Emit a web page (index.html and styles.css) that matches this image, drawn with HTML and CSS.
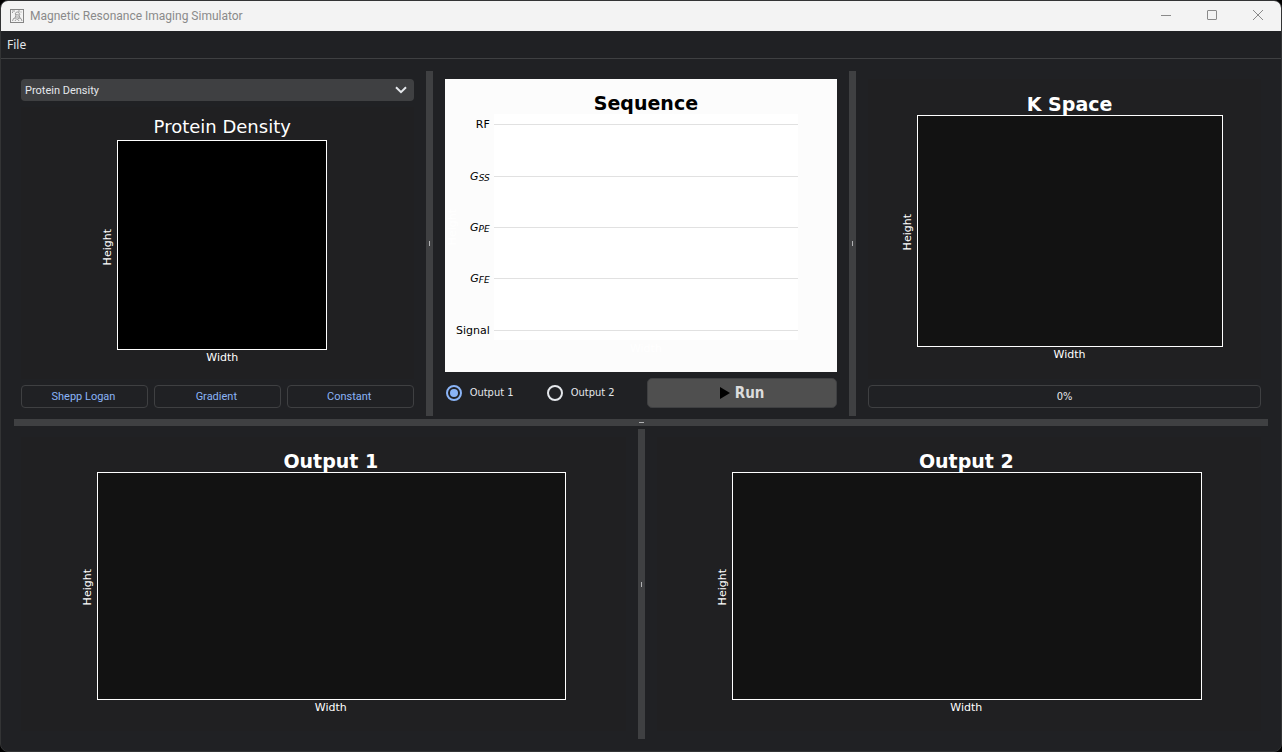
FILE: index.html
```html
<!DOCTYPE html>
<html lang="en">
<head>
<meta charset="utf-8">
<title>Magnetic Resonance Imaging Simulator</title>
<link rel="stylesheet" href="styles.css">
</head>
<body>
<div class="window">
  <header class="titlebar">
    <svg class="app-icon" width="14" height="14" viewBox="0 0 14 14" fill="none" stroke="#858585" aria-hidden="true">
      <rect x="0.5" y="0.5" width="13" height="13"/>
      <path d="M2 2h3M2.500 3v1M8 2h2M11 2.500v1M5 5l1.500-2h2L10 6M5 5.500l4 .5M6 6l-1 3M9 6l1 3M6 8h3M2.500 12l1-2.500 2-.5 1.500 1.500 2-1.500 2 .5 1 2.500M5 12l1-1.500M9 12l-1-1.500" stroke-width="0.800"/>
    </svg>
    <h1 class="window-title">Magnetic Resonance Imaging Simulator</h1>
    <div class="window-controls">
      <button class="window-button" type="button" aria-label="Minimize"><svg width="12" height="12" viewBox="0 0 12 12" stroke="#8a8a8a" fill="none"><path d="M1 5.500h10"/></svg></button>
      <button class="window-button" type="button" aria-label="Maximize"><svg width="12" height="12" viewBox="0 0 12 12" stroke="#8a8a8a" fill="none"><rect x="1.500" y="0.500" width="9" height="9" rx="0.500"/></svg></button>
      <button class="window-button" type="button" aria-label="Close"><svg width="12" height="12" viewBox="0 0 12 12" stroke="#8a8a8a" fill="none"><path d="M1 0l10 10M11 0L1 10"/></svg></button>
    </div>
  </header>
  <nav class="menubar"><button class="menu-item" type="button">File</button></nav>

  <main class="workspace">
    <div class="row row-top">
      <section class="panel" aria-label="Phantom">
        <div class="combo">
          <select class="combo-select" aria-label="Phantom property">
            <option>Protein Density</option>
            <option>T1</option>
            <option>T2</option>
          </select>
          <svg class="combo-arrow" width="12" height="8" viewBox="0 0 12 8" fill="none" stroke="#e4e7eb" stroke-width="2" aria-hidden="true"><path d="M1 1.200l5 5 5-5"/></svg>
        </div>
        <figure class="canvas">
          <figcaption class="plot-title plot-title-light">Protein Density</figcaption>
          <div class="square-row">
            <span class="y-label">Height</span>
            <div class="axes axes-square"></div>
          </div>
          <span class="x-label">Width</span>
        </figure>
        <div class="button-row">
          <button class="button" type="button">Shepp Logan</button>
          <button class="button" type="button">Gradient</button>
          <button class="button" type="button">Constant</button>
        </div>
      </section>

      <div class="splitter" role="separator" aria-orientation="vertical"></div>

      <section class="panel" aria-label="Sequence">
        <figure class="canvas canvas-light">
          <figcaption class="plot-title">Sequence</figcaption>
          <div class="tick-area">
            <span class="y-label ghost">Height</span>
            <div class="ticks">
              <span>RF</span>
              <span><i>G<small>SS</small></i></span>
              <span><i>G<small>PE</small></i></span>
              <span><i>G<small>FE</small></i></span>
              <span>Signal</span>
            </div>
          </div>
          <div class="lines"><hr><hr><hr><hr><hr></div>
          <span class="x-label ghost">Width</span>
        </figure>
        <div class="run-row">
          <label class="radio"><input type="radio" name="output" checked>Output 1</label>
          <label class="radio"><input type="radio" name="output">Output 2</label>
          <button class="run" type="button"><svg width="10" height="12" viewBox="0 0 10 12" aria-hidden="true"><path d="M0 0l10 6-10 6z"/></svg>Run</button>
        </div>
      </section>

      <div class="splitter" role="separator" aria-orientation="vertical"></div>

      <section class="panel" aria-label="K Space">
        <figure class="canvas">
          <figcaption class="plot-title">K Space</figcaption>
          <span class="y-label">Height</span>
          <div class="axes"></div>
          <span class="x-label">Width</span>
        </figure>
        <div class="progress">
          <progress class="progress-bar" id="scan" value="0" max="100"></progress>
          <label class="progress-label" for="scan">0%</label>
        </div>
      </section>
    </div>

    <div class="splitter splitter-wide" role="separator" aria-orientation="horizontal"></div>

    <div class="row row-bottom">
      <section class="panel" aria-label="Output 1">
        <figure class="canvas">
          <figcaption class="plot-title">Output 1</figcaption>
          <span class="y-label">Height</span>
          <div class="axes"></div>
          <span class="x-label">Width</span>
        </figure>
      </section>
      <div class="splitter" role="separator" aria-orientation="vertical"></div>
      <section class="panel" aria-label="Output 2">
        <figure class="canvas">
          <figcaption class="plot-title">Output 2</figcaption>
          <span class="y-label">Height</span>
          <div class="axes"></div>
          <span class="x-label">Width</span>
        </figure>
      </section>
    </div>
  </main>
</div>
</body>
</html>
```

FILE: styles.css
```css
* { box-sizing: border-box; }

body {
  margin: 0;
  background: #000;
  color: #e4e7eb;
  font: 11px/16px Roboto, "Noto Sans", sans-serif;
}

button, select, input { font: inherit; color: inherit; margin: 0; }

.window {
  display: flex;
  flex-direction: column;
  min-height: 100vh;
  overflow: hidden;
  border: 1px solid #333435;
  border-radius: 8px;
  background: #202124;
}

/* Title bar and menu */
.titlebar {
  display: flex;
  align-items: center;
  height: 30px;
  padding-left: 9px;
  background: #f3f3f3;
}
.window-title {
  flex: 1;
  margin: 0 0 0 6px;
  color: #8a8a8a;
  font: 400 12px/16px Roboto, "Open Sans", sans-serif;
}
.window-controls { display: flex; }
.window-button {
  display: grid;
  place-items: center;
  width: 46px;
  height: 30px;
  padding: 0;
  border: 0;
  background: none;
}
.menubar {
  display: flex;
  height: 28px;
  border-bottom: 1px solid #3f4042;
}
.menu-item {
  padding: 0 6px;
  border: 0;
  background: none;
  font: 12px/16px "Noto Sans", sans-serif;
}

/* Panels and splitters */
.workspace {
  flex: 1;
  display: grid;
  grid-template-rows: minmax(0, 345fr) 7px minmax(0, 310fr);
  row-gap: 3px;
  padding: 12px 20px;
}
.row { display: grid; column-gap: 12px; }
.row-top { grid-template-columns: minmax(0, 1fr) 7px minmax(0, 1fr) 7px minmax(0, 1fr); }
.row-bottom { grid-template-columns: minmax(0, 1fr) 7px minmax(0, 1fr); }
.panel {
  display: flex;
  flex-direction: column;
  gap: 6px;
  padding: 8px 0;
}
.splitter {
  display: grid;
  place-items: center;
  background: #3f4042;
}
.splitter::before {
  content: "";
  width: 1px;
  height: 5px;
  background: #b0b1b3;
}
.splitter-wide { margin: 0 -7px; }
.splitter-wide::before { width: 5px; height: 1px; }

/* Plots */
.canvas {
  flex: 1;
  display: grid;
  grid-template-columns: 12.5% minmax(0, 1fr) 10%;
  grid-template-rows: minmax(0, 12fr) minmax(0, 77fr) minmax(0, 11fr);
  margin: 0;
  background: #202022;
  color: #fff;
  font: 11px/15px "DejaVu Sans", sans-serif;
}
.plot-title {
  grid-area: 1 / 2;
  place-self: end center;
  font-size: 19px;
  line-height: 22px;
  font-weight: 700;
  white-space: nowrap;
}
.plot-title-light {
  padding-bottom: 2px;
  font-size: 18px;
  font-weight: 400;
}
.axes {
  grid-area: 2 / 2;
  margin: 0 -1px -1px 0;
  border: 1px solid #fff;
  background: #121212;
}
.y-label {
  grid-area: 2 / 1;
  place-self: center end;
  margin: 4px 2px 0 0;
  writing-mode: vertical-rl;
  transform: rotate(180deg);
}
.x-label {
  grid-area: 3 / 2;
  place-self: start center;
  padding-top: 1px;
}
.square-row {
  grid-area: 2 / 2;
  display: grid;
  grid-template-columns: 1fr auto 1fr;
  margin-bottom: -1px;
}
.square-row .y-label { grid-area: 1 / 1; }
.axes-square {
  grid-area: 1 / 2;
  height: 100%;
  margin: 0;
  aspect-ratio: 1;
  background: #000;
}
.canvas-light { background: #fcfcfc; color: #000; }
.ghost { color: #fff; }
.tick-area {
  grid-area: 2 / 1;
  display: flex;
  justify-content: space-between;
}
.tick-area .y-label { width: 10px; margin: 0; }
.ticks {
  display: flex;
  flex-direction: column;
  justify-content: space-between;
  padding: 3px 4px 2px 0;
  text-align: right;
}
.ticks span { height: 15px; }
.ticks small { font-size: 9px; line-height: 1; position: relative; top: 1px; }
.lines {
  grid-area: 2 / 2;
  display: flex;
  flex-direction: column;
  justify-content: space-between;
  padding: 10px 0 9px;
  background: #fff;
}
.lines hr { height: 1px; margin: 0; border: 0; background: #e1e1e1; }

/* Controls */
.combo { display: grid; align-items: center; }
.combo-select {
  grid-area: 1 / 1;
  height: 22px;
  padding: 1px 4px 0;
  border: 0;
  border-radius: 4px;
  background: #3f4042;
  appearance: none;
}
.combo-arrow {
  grid-area: 1 / 1;
  justify-self: end;
  margin-right: 7px;
  pointer-events: none;
}
.button-row { display: grid; grid-template-columns: repeat(3, 1fr); gap: 6px; }
.button {
  height: 23px;
  padding: 0 2px 0 0;
  border: 1px solid #3f4042;
  border-radius: 4px;
  background: none;
  color: #8ab4f7;
}
.run-row { display: grid; grid-template-columns: 1fr 1fr 2fr; gap: 6px; }
.radio {
  display: flex;
  align-items: center;
  gap: 8px;
  padding-left: 1px;
  font-family: "DejaVu Sans Condensed", "DejaVu Sans", sans-serif;
}
.radio input {
  display: grid;
  place-items: center;
  width: 16px;
  height: 16px;
  border: 2px solid #e4e7eb;
  border-radius: 50%;
  appearance: none;
}
.radio input:checked { border-color: #8ab4f7; }
.radio input:checked::before {
  content: "";
  width: 8px;
  height: 8px;
  border-radius: 50%;
  background: #8ab4f7;
}
.run {
  display: flex;
  align-items: center;
  justify-content: center;
  gap: 5px;
  height: 30px;
  padding: 0;
  border: 1px solid #3f4042;
  border-radius: 5px;
  background: #4f4f4f;
  color: #dcdcdc;
  font: 700 15px/20px "DejaVu Sans Condensed", "DejaVu Sans", sans-serif;
}
.progress { display: grid; }
.progress-bar {
  grid-area: 1 / 1;
  width: 100%;
  height: 23px;
  border: 1px solid #3f4042;
  border-radius: 4px;
  background: none;
  appearance: none;
}
.progress-bar::-webkit-progress-bar { background: none; }
.progress-bar::-webkit-progress-value { background: #8ab4f7; }
.progress-label {
  grid-area: 1 / 1;
  place-self: center;
  font-family: "DejaVu Sans Condensed", "DejaVu Sans", sans-serif;
}
```
